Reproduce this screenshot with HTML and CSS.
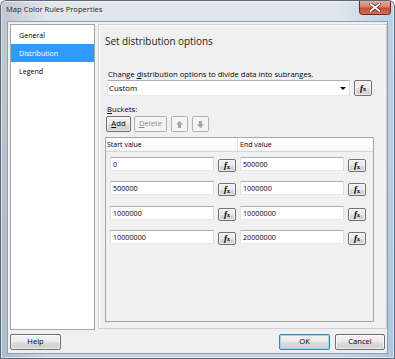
FILE: index.html
```html
<!DOCTYPE html>
<html>
<head>
<meta charset="utf-8">
<title>Map Color Rules Properties</title>
<link rel="stylesheet" href="styles.css">
</head>
<body>
<div class="window">
  <div class="titlebar">
    <span class="title">Map Color Rules Properties</span>
    <span class="close"><svg width="12" height="9" viewBox="0 0 12 9"><path d="M1.5 1 L10.5 8 M10.5 1 L1.5 8" stroke="#4a1a14" stroke-width="3.2" stroke-linecap="square"/><path d="M1.5 1 L10.5 8 M10.5 1 L1.5 8" stroke="#fff" stroke-width="1.8" stroke-linecap="square"/></svg></span>
  </div>
  <div class="client">
    <div class="main">
      <ul class="nav">
        <li>General</li>
        <li class="sel">Distribution</li>
        <li>Legend</li>
      </ul>
      <div class="panel">
        <h1 class="heading">Set distribution options</h1>
        <div class="label">Change <u>d</u>istribution options to divide data into subranges.</div>
        <div class="combo-row">
          <div class="combo"><span>Custom</span><span class="arrow"></span></div>
          <button class="btn fx"><i>f</i><sub>x</sub></button>
        </div>
        <div class="label buckets"><u>B</u>uckets:</div>
        <div class="toolbar">
          <button class="btn add"><u>A</u>dd</button>
          <button class="btn disabled del"><u>D</u>elete</button>
          <button class="btn disabled arrowbtn"><svg width="7" height="7" viewBox="0 0 7 7"><path d="M3.5 0 L7 3.5 H5 V7 H2 V3.5 H0 Z" fill="#a3a3a3"/></svg></button>
          <button class="btn disabled arrowbtn"><svg width="7" height="7" viewBox="0 0 7 7"><path d="M3.5 7 L7 3.5 H5 V0 H2 V3.5 H0 Z" fill="#a3a3a3"/></svg></button>
        </div>
        <div class="grid">
          <div class="grid-head">
            <div class="col col1">Start value</div>
            <div class="col col2">End value</div>
          </div>
          <div class="grid-body">
            <div class="row">
              <div class="tb">0</div><button class="btn fx small"><i>f</i><sub>x</sub></button>
              <div class="tb">500000</div><button class="btn fx small"><i>f</i><sub>x</sub></button>
            </div>
            <div class="row">
              <div class="tb">500000</div><button class="btn fx small"><i>f</i><sub>x</sub></button>
              <div class="tb">1000000</div><button class="btn fx small"><i>f</i><sub>x</sub></button>
            </div>
            <div class="row">
              <div class="tb">1000000</div><button class="btn fx small"><i>f</i><sub>x</sub></button>
              <div class="tb">10000000</div><button class="btn fx small"><i>f</i><sub>x</sub></button>
            </div>
            <div class="row">
              <div class="tb">10000000</div><button class="btn fx small"><i>f</i><sub>x</sub></button>
              <div class="tb">20000000</div><button class="btn fx small"><i>f</i><sub>x</sub></button>
            </div>
          </div>
        </div>
      </div>
    </div>
    <div class="footer">
      <button class="btn fbtn help">Help</button>
      <button class="btn fbtn ok default">OK</button>
      <button class="btn fbtn cancel">Cancel</button>
    </div>
  </div>
</div>
</body>
</html>
```

FILE: styles.css
```css
* { box-sizing: border-box; margin: 0; padding: 0; }
html, body { width: 395px; height: 359px; overflow: hidden; background: #ffffff; }
body { font-family: "Open Sans", "Noto Sans", sans-serif; font-size: 7.6px; color: #000; }
u { text-decoration: underline; text-underline-offset: 1px; }

.window {
  width: 395px; height: 359px;
  display: flex; flex-direction: column;
  padding: 0 7px 5px 7px;
  border-radius: 6px 6px 0 0;
  background:
    linear-gradient(to right, rgba(120,135,150,0.35) 0, rgba(255,255,255,0) 12%, rgba(255,255,255,0) 85%, rgba(140,180,225,0.45) 100%),
    linear-gradient(to bottom, #e3e7ec 0, #d9e0e8 30%, #c6d4e3 100%);
  box-shadow: inset 0 0 0 1px #5c6b7c, inset 0 0 0 2px rgba(255,255,255,0.5);
}

.titlebar { height: 21px; display: flex; align-items: flex-start; }
.title { margin: 3px 0 0 -1px; line-height: 12px; color: #1b1b1b; font-size: 7.6px; }
.close {
  margin-left: auto; margin-right: -3px; margin-top: 1px;
  width: 32px; height: 14px;
  display: flex; align-items: center; justify-content: center;
  border: 1px solid #6e2a22; border-top: none;
  border-radius: 0 0 4px 4px;
  background: linear-gradient(to bottom, #e9aa9c 0, #d8806c 45%, #c84a33 55%, #d0705a 100%);
}

.client {
  flex: 1;
  background: #f0f0f0;
  border: 1px solid #8e9fb3;
  display: flex; flex-direction: column;
  padding: 2px 0 3px 2px;
}
.main { display: flex; gap: 3px; height: 306px; }

.nav {
  width: 85px; height: 306px;
  background: #fff;
  border: 1px solid #a5a5a5;
  list-style: none;
  padding: 1px 0;
}
.nav li { height: 18px; line-height: 18px; padding-left: 8px; font-size: 7.1px; }
.nav li.sel { background: #3399ff; color: #fff; }

.panel {
  width: 289px; height: 305px;
  border: 1px solid #cfcfcf;
  box-shadow: inset 1px 1px 0 #ffffff;
  padding: 9px 0 0 6px;
  display: flex; flex-direction: column; align-items: flex-start;
}
.heading { font-size: 9.9px; line-height: 14px; font-weight: normal; color: #202020; }

.label { margin-top: 21px; margin-left: 3px; line-height: 11px; font-size: 7.6px; }
.buckets { margin-top: 8px; margin-left: 2px; font-size: 7.7px; }

.combo-row { display: flex; gap: 4px; margin-left: 2px; height: 16px; }
.combo {
  width: 243px; height: 16px;
  background: #fff;
  border: 1px solid #abadb3;
  border-color: #abadb3 #dbdfe6 #e3e9ef #e2e3ea;
  display: flex; align-items: center; justify-content: space-between;
  padding: 0 3px 0 1px;
  font-size: 7.8px;
}
.arrow {
  width: 0; height: 0;
  border-left: 3px solid transparent; border-right: 3px solid transparent;
  border-top: 3px solid #000;
}

.btn {
  font: inherit; font-size: 7.7px; color: #000;
  height: 16px;
  border: 1px solid #707070;
  border-radius: 2px;
  background: linear-gradient(to bottom, #f2f2f2 0, #ebebeb 50%, #dddddd 51%, #cfcfcf 100%);
  box-shadow: inset 0 0 0 1px rgba(255,255,255,0.6);
  display: flex; align-items: center; justify-content: center;
  line-height: 1;
}
.btn.disabled { border-color: #adb2b5; background: #f4f4f4; color: #8a8a8a; box-shadow: none; }
.btn.default { border-color: #3c7fb1; box-shadow: inset 0 0 0 1px #9fd4f2; }

.fx { width: 18px; }
.fx i { font-family: "Liberation Serif", serif; font-weight: bold; font-style: italic; font-size: 9px; }
.fx sub { font-family: "Liberation Serif", serif; font-weight: bold; font-size: 6px; vertical-align: 0; position: relative; top: 1px; }
.fx.small { height: 13px; margin-top: 2px; }

.toolbar { display: flex; margin-top: 1px; margin-left: 1px; height: 16px; }
.add { width: 25px; }
.del { width: 33px; margin-left: 3px; }
.arrowbtn { width: 17px; margin-left: 4px; }

.grid {
  margin-top: 5px;
  width: 269px; height: 185px;
  border: 1px solid #a5a5a5;
  display: flex; flex-direction: column;
}
.grid-head {
  display: flex; height: 14px;
  border-bottom: 1px solid #d5d5d5;
  background: linear-gradient(to bottom, #ffffff 0, #f7f7f7 100%);
}
.col { line-height: 13px; font-size: 7px; }
.col1 { width: 132px; padding-left: 1px; border-right: 1px solid #e0e0e0; }
.col2 { padding-left: 2px; }

.grid-body { display: flex; flex-direction: column; gap: 10.33px; padding: 5px 0 0 4px; }
.row { display: flex; height: 14px; align-items: flex-start; }
.row .tb + .btn { margin-left: 4px; }
.row .btn + .tb { margin-left: 4px; }
.tb {
  width: 104px; height: 14px;
  background: #fff;
  border: 1px solid #abadb3;
  border-color: #abadb3 #dbdfe6 #e3e9ef #e2e3ea;
  padding-left: 2px;
  line-height: 12px;
  font-size: 7.2px;
}

.footer { display: flex; margin-top: 4px; padding-right: 2px; height: 16px; }
.fbtn { height: 16px; font-size: 7.6px; }
.help { width: 51px; }
.ok { width: 51px; margin-left: auto; }
.cancel { width: 50px; margin-left: 5px; }
```
